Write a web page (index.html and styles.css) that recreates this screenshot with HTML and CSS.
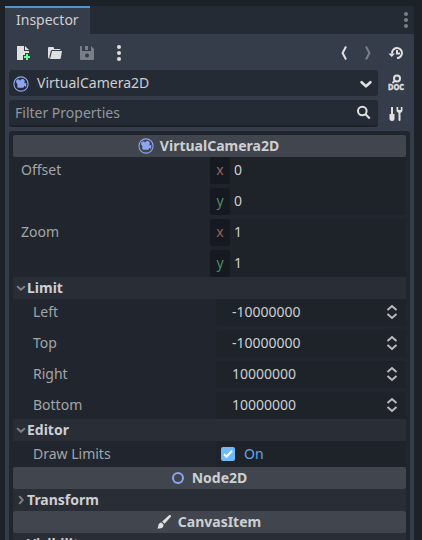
FILE: index.html
```html
<!DOCTYPE html>
<html lang="en">
<head>
<meta charset="utf-8">
<title>Inspector</title>
<link rel="stylesheet" href="styles.css">
</head>
<body>
<svg class="defs" aria-hidden="true">
  <symbol id="camera" viewBox="0 0 16 16">
    <circle cx="8" cy="8" r="7.100" fill="none" stroke="#8da5f3" stroke-width="1.100"/>
    <path d="M9.400 2.900A2.300 2.300 0 0 0 7.100 4.800 2 2 0 0 0 3.100 6a2 2 0 0 0 1.200 1.800V10.500a1.200 1.200 0 0 0 1.200 1.200h4.300A1.200 1.200 0 0 0 11 10.500V9.800l2.200 1.300V6.800L11.500 7.600V6.300A2.300 2.300 0 0 0 9.400 2.900z" fill="#8da5f3"/>
  </symbol>
  <symbol id="dots" viewBox="0 0 16 16"><circle cx="8" cy="2" r="2"/><circle cx="8" cy="8" r="2"/><circle cx="8" cy="14" r="2"/></symbol>
  <symbol id="spin" viewBox="0 0 12 16"><path d="M1.500 6L6 2l4.500 4M1.500 10L6 14l4.500-4" fill="none" stroke="currentColor" stroke-width="2"/></symbol>
  <symbol id="down" viewBox="0 0 12 12"><path d="M2.700 4.700L6 7.700l3.300-3" fill="none" stroke="currentColor" stroke-width="2" stroke-linecap="round" stroke-linejoin="round"/></symbol>
</svg>
<main class="dock">
  <header class="tabs">
    <div class="tab">Inspector</div>
    <svg class="icon tab-menu"><use href="#dots"/></svg>
  </header>
  <section class="content">
    <div class="toolbar">
      <svg class="icon" viewBox="0 0 16 16"><path d="M2 1h7v5h5v2h-4v2H8v5H2zM10 1l4 4h-4z"/><path d="M11 9h2v2h2v2h-2v2h-2v-2H9v-2h2z" fill="#5fff97"/></svg>
      <svg class="icon" viewBox="0 0 16 16"><path d="M1 3a1 1 0 0 1 1-1h4a1 1 0 0 1 1 1v1h5.500a1 1 0 0 1 1 1H5.200a1.400 1.400 0 0 0-1.400 1L2.500 11v2.500A1.500 1.500 0 0 1 1 12z"/><path d="M5 6h10l-1.200 7a1.200 1.200 0 0 1-1.200 1H3z"/></svg>
      <svg class="icon save" viewBox="0 0 16 16"><path fill-rule="evenodd" d="M2 1h1v4.500a.5.5 0 0 0 .5.5H11.500a.5.5 0 0 0 .5-.5V1l3 3v10a1 1 0 0 1-1 1H2a1 1 0 0 1-1-1V2a1 1 0 0 1 1-1zM8 8.500a2 2 0 1 0 0 4 2 2 0 0 0 0-4zM6 1h3v4H6z"/></svg>
      <svg class="icon"><use href="#dots"/></svg>
      <svg class="icon back" viewBox="0 0 16 16"><path d="M10 1.500L6.600 8l3.400 6.500" class="stroke"/></svg>
      <svg class="icon forward" viewBox="0 0 16 16"><path d="M6 1.500L9.400 8 6 14.500" class="stroke"/></svg>
      <svg class="icon history" viewBox="0 0 16 16"><path d="M4 8.500a5 5 0 1 1 5 4.500M9 5v3.500h3" class="stroke"/><path d="M.5 8.500h6.500L3.700 12z"/></svg>
    </div>
    <div class="row">
      <div class="field object"><svg class="icon"><use href="#camera"/></svg><span>VirtualCamera2D</span><svg class="chevron"><use href="#down"/></svg></div>
      <svg class="icon" viewBox="0 0 16 16"><circle cx="9" cy="3.500" r="3" class="stroke"/><path d="M7 5.600L4.500 8" class="stroke"/><text x="0" y="15" textLength="16" lengthAdjust="spacingAndGlyphs" class="doc">DOC</text></svg>
    </div>
    <div class="row filter">
      <div class="field search"><span>Filter Properties</span><svg class="icon" viewBox="0 0 16 16"><circle cx="6.300" cy="6" r="4.300" class="stroke"/><path d="M9.500 9.200l4.300 4.300" class="stroke"/></svg></div>
      <svg class="icon" viewBox="0 0 16 16"><path d="M3 1h2v7h1.500v4.500a2.500 2.500 0 0 1-5 0V8H3zM8.500 1v3.500a2.500 2.500 0 0 0 2 2.300V14a1 1 0 0 0 2 0V6.800a2.500 2.500 0 0 0 2-2.300V1h-1.700v3h-2.600V1z"/></svg>
    </div>
    <div class="inspector">
      <div class="category"><svg class="icon"><use href="#camera"/></svg>VirtualCamera2D</div>
      <div class="vector"><label>Offset</label><div class="axes"><div><b class="x">x</b>0</div><div><b class="y">y</b>0</div></div></div>
      <div class="vector last"><label>Zoom</label><div class="axes"><div><b class="x">x</b>1</div><div><b class="y">y</b>1</div></div></div>
      <div class="group"><svg><use href="#down"/></svg>Limit</div>
      <div class="property"><label>Left</label><div class="number">-10000000<svg><use href="#spin"/></svg></div></div>
      <div class="property"><label>Top</label><div class="number">-10000000<svg><use href="#spin"/></svg></div></div>
      <div class="property"><label>Right</label><div class="number">10000000<svg><use href="#spin"/></svg></div></div>
      <div class="property last"><label>Bottom</label><div class="number">10000000<svg><use href="#spin"/></svg></div></div>
      <div class="group"><svg><use href="#down"/></svg>Editor</div>
      <div class="property check"><label>Draw Limits</label><div class="toggle"><svg viewBox="0 0 14 14"><rect width="14" height="14" rx="2" fill="#70bafa"/><path d="M3 7.300l2.500 2.400 5.500-6" fill="none" stroke="#fff" stroke-width="2"/></svg>On</div></div>
      <div class="category"><svg class="icon" viewBox="0 0 16 16"><circle cx="8" cy="8" r="5" fill="none" stroke="#8da5f3" stroke-width="2"/></svg>Node2D</div>
      <div class="group"><svg class="closed"><use href="#down"/></svg>Transform</div>
      <div class="category"><svg class="icon" viewBox="0 0 16 16"><path d="M13 1.300a1.200 1.200 0 0 1 1.700 1.700L8.500 9.700 6.200 7.500zM5.500 8.500l2 2c.3 2.500-1.500 4.500-6.500 4 1.200-.8 1-1.500 1.300-3 .3-1.700 1.500-2.800 3.200-3z"/></svg>CanvasItem</div>
      <div class="group"><svg><use href="#down"/></svg>Visibility</div>
    </div>
  </section>
</main>
</body>
</html>
```
FILE: styles.css
```css
* { box-sizing: border-box; }
body {
  margin: 0;
  height: 540px;
  padding: 6px 8px 0 5px;
  overflow: hidden;
  background: #1d2229;
  color: #cdcfd2;
  font: 14px/20px "Noto Sans", sans-serif;
}
svg { display: block; flex: none; overflow: visible; }
.defs { position: absolute; width: 0; height: 0; }
.icon { width: 16px; height: 16px; fill: #e0e0e0; color: #e0e0e0; }
.stroke { fill: none; stroke: #e0e0e0; stroke-width: 2; }
.doc { font: 700 8px "Noto Sans", sans-serif; stroke: #e0e0e0; stroke-width: .4; }
.dock { width: 409px; height: 534px; }
.tabs { display: flex; justify-content: space-between; height: 28px; background: #252b34; border-radius: 0 3px 0 0; }
.tab { width: 85px; padding: 2px 0 0 11px; border-top: 2px solid #5792c9; background: #363d4a; }
.tab-menu { margin: 6px 0 0; fill: #7c7f85; }
.content { height: 506px; padding: 11px 4px 0; background: #363d4a; }
.toolbar { display: flex; height: 25px; padding-left: 6px; gap: 16px; }
.save, .forward { opacity: .4; }
.back { margin-left: auto; }
.forward { margin-left: -8px; }
.history { margin-right: 6px; margin-left: -4px; }
.row { display: flex; align-items: center; gap: 10px; height: 26px; margin-bottom: 4px; }
.field { display: flex; align-items: center; width: 369px; height: 26px; background: #252b34; border-radius: 3px; }
.object { padding: 0 4px; gap: 8px; }
.object .icon { margin-top: 2px; }
.object .chevron { width: 16px; height: 16px; margin: 2px 0 0 auto; color: #e0e0e0; }
.filter { height: 27px; }
.search { height: 27px; padding: 0 6px; justify-content: space-between; border-bottom: 2px solid #1d2229; color: #94989d; }
.inspector { height: 409px; padding: 4px; background: #21262e; border-radius: 3px 3px 0 0; overflow: hidden; }
.category { display: flex; align-items: center; justify-content: center; gap: 6px; height: 22px; padding-right: 2px; background: #41454d; border-radius: 2px; font-weight: 700; }
.vector { display: flex; height: 58px; margin-bottom: 4px; }
.vector label { width: 197px; padding: 3px 0 0 8px; }
label { color: #a3a5a8; }
.axes { display: grid; grid-template-rows: 27px 27px; gap: 4px; width: 196px; background: #1e2229; border-radius: 3px; }
.axes div { display: flex; padding-top: 3px; }
.axes b { width: 20px; height: 27px; margin: -3px 4px 0 0; padding-top: 3px; border-radius: 3px; background: #16191f; text-align: center; font-weight: 400; }
.x { color: #91675c; }
.y { color: #4d8c65; }
.last { margin-bottom: 0 !important; }
.group { display: flex; align-items: center; height: 22px; padding-left: 2px; background: #292d36; font-weight: 700; }
.group svg { width: 12px; height: 12px; color: #7c7f85; }
.group .closed { transform: rotate(-90deg); }
.property { display: flex; height: 27px; margin-bottom: 4px; }
.property label { width: 203px; padding: 3px 0 0 20px; }
.number { display: flex; align-items: center; justify-content: space-between; width: 190px; padding: 0 8px 1px 16px; background: #1e2229; border-radius: 3px; }
.number svg { width: 12px; height: 16px; color: #bababa; }
.check { height: 26px; margin: 0; }
.toggle { display: flex; align-items: center; gap: 9px; width: 190px; padding-left: 5px; background: #1e2229; color: #62a9e5; }
.toggle svg { width: 14px; height: 14px; }
```
